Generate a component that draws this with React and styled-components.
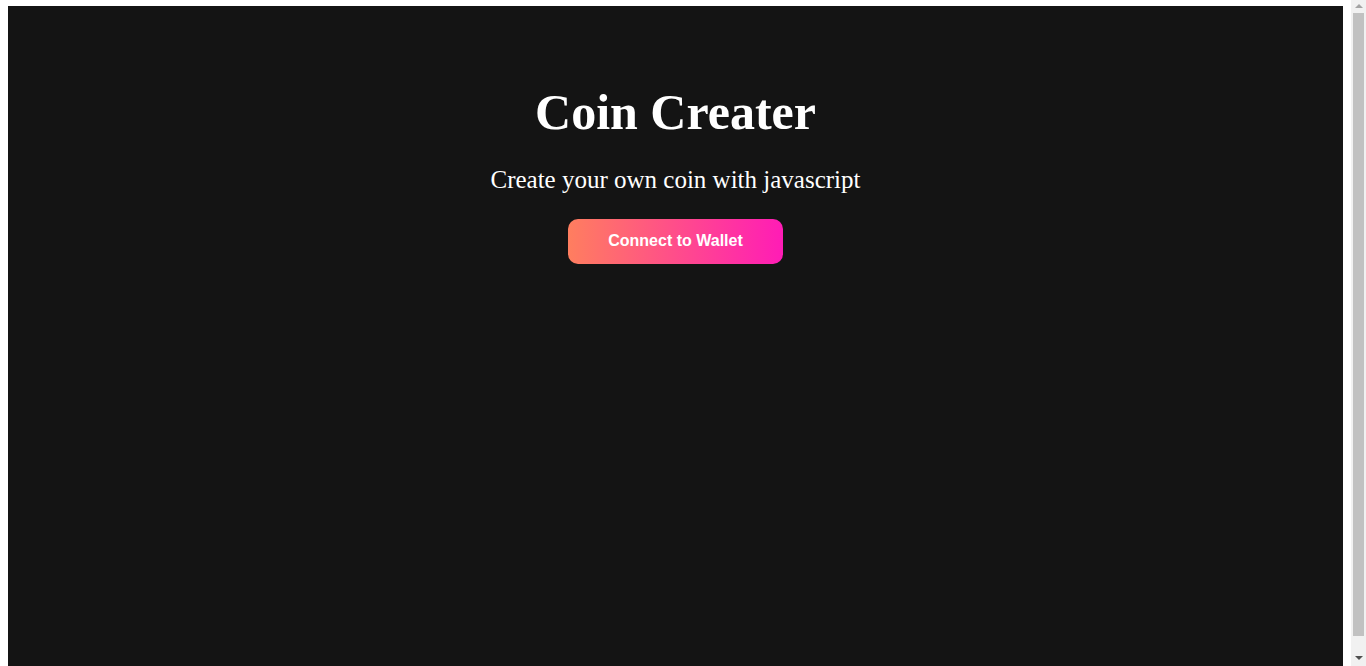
import React from 'react';
import styled, { createGlobalStyle } from 'styled-components';

const GlobalStyle = createGlobalStyle`
    body {
        margin: 6px 23px 8px 8px;
        background: #ffffff;
        font-family: "Liberation Serif", "Times New Roman", serif;
    }
`;

const Page = styled.main`
    min-height: 100vh;
    background: #141414;
    color: #ffffff;
    display: flex;
    flex-direction: column;
    align-items: center;
    padding-top: 78px;
    box-sizing: border-box;
`;

const Title = styled.h1`
    margin: 0;
    font-size: 50px;
    font-weight: 700;
    line-height: 57px;
`;

const Subtitle = styled.p`
    margin: 24px 0 0;
    font-size: 25px;
    line-height: 29px;
`;

const ConnectButton = styled.button`
    margin-top: 25px;
    width: 215px;
    height: 45px;
    padding: 0 0 2px;
    border: none;
    border-radius: 10px;
    background: linear-gradient(90deg, #ff7e5f 0%, #ff1cb6 100%);
    color: #ffffff;
    font-family: "Liberation Sans", Arial, sans-serif;
    font-size: 16px;
    font-weight: 700;
    cursor: pointer;
`;

// window scrollbar, drawn since the headless browser hides its own
const ScrollTrack = styled.div`
    position: fixed;
    top: 0;
    right: 0;
    width: 15px;
    height: 100vh;
    background: #f1f1f1;
    display: flex;
    flex-direction: column;
    align-items: center;
`;

const ScrollArrow = styled.div`
    width: 0;
    height: 0;
    margin: ${props => props.down ? '0 0 6px' : '4px 0 0'};
    border-left: 4px solid transparent;
    border-right: 4px solid transparent;
    ${props => props.down
        ? 'border-top: 4px solid #505050;'
        : 'border-bottom: 4px solid #a3a3a3;'}
`;

const ScrollThumb = styled.div`
    flex: 1;
    width: 11px;
    margin: 5px 0 20px;
    background: #c1c1c1;
`;

const App = () => {
    return (
        <>
            <GlobalStyle />
            <Page>
                <Title>Coin Creater</Title>
                <Subtitle>Create your own coin with javascript</Subtitle>
                <ConnectButton>Connect to Wallet</ConnectButton>
            </Page>
            <ScrollTrack>
                <ScrollArrow />
                <ScrollThumb />
                <ScrollArrow down />
            </ScrollTrack>
        </>
    );
};

export default App;
